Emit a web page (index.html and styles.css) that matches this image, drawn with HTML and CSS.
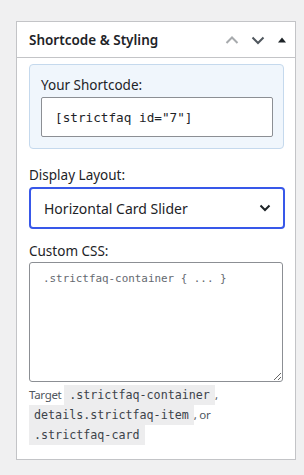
FILE: index.html
```html
<!DOCTYPE html>
<html lang="en">
<head>
    <meta charset="UTF-8">
    <meta name="viewport" content="width=device-width, initial-scale=1.0">
    <title>Shortcode &amp; Styling</title>
    <link rel="stylesheet" href="styles.css">
</head>
<body>
    <div class="postbox">
        <div class="postbox-header">
            <h2>Shortcode &amp; Styling</h2>
            <div class="handle-actions">
                <svg class="handle up" width="14" height="14" viewBox="0 0 14 14"><path d="M1.5 10 L7 4.5 L12.5 10" fill="none" stroke="currentColor" stroke-width="2"/></svg>
                <svg class="handle down" width="14" height="14" viewBox="0 0 14 14"><path d="M1.5 4.5 L7 10 L12.5 4.5" fill="none" stroke="currentColor" stroke-width="2"/></svg>
                <svg class="handle toggle" width="10" height="14" viewBox="0 0 10 14"><path d="M1 9.5 L5 4.5 L9 9.5 Z" fill="currentColor"/></svg>
            </div>
        </div>

        <div class="inside">
            <!-- Shortcode -->
            <div class="shortcode-box">
                <label class="field-label">Your Shortcode:</label>
                <input class="shortcode-input" type="text" value='[strictfaq id="7"]' readonly>
            </div>

            <!-- Layout -->
            <label class="field-label">Display Layout:</label>
            <div class="select-wrap">
                <span>Horizontal Card Slider</span>
                <svg width="12" height="8" viewBox="0 0 12 8"><path d="M1.5 1.5 L6 6 L10.5 1.5" fill="none" stroke="#1d2327" stroke-width="2"/></svg>
            </div>

            <!-- CSS -->
            <label class="field-label css-label">Custom CSS:</label>
            <textarea class="css-input" placeholder=".strictfaq-container { ... }"></textarea>
            <p class="help">Target <code>.strictfaq-container</code>, <code>details.strictfaq-item</code>, or <code>.strictfaq-card</code></p>
        </div>
    </div>
</body>
</html>
```

FILE: styles.css
```css
body {
    margin: 0;
    padding: 21px 0 0 16px;
    background-color: #f0f0f1;
    font-family: "Noto Sans", "Open Sans", sans-serif;
    color: #1d2327;
}

.postbox {
    width: 278px;
    background-color: #fff;
    border: 1px solid #c3c4c7;
}

.postbox-header {
    display: flex;
    align-items: center;
    justify-content: space-between;
    height: 35px;
    border-bottom: 1px solid #c3c4c7;
    padding: 0 8px 0 12px;
}

.postbox-header h2 {
    margin: 0;
    font-size: 13.5px;
    font-weight: 600;
}

.handle-actions {
    display: flex;
    align-items: center;
    gap: 12px;
}

.handle.up {
    color: #a7aaad;
}

.handle.down {
    color: #50575e;
}

.handle.toggle {
    color: #1d2327;
}

.inside {
    padding: 6px 11px 14px 12px;
}

.shortcode-box {
    background-color: #f0f6fc;
    border: 1px solid #c5d9ed;
    border-radius: 4px;
    padding: 11px 9px 11px 11px;
    margin-bottom: 17px;
}

.field-label {
    display: block;
    font-size: 13.5px;
    line-height: 18px;
    margin-bottom: 3px;
}

.shortcode-input {
    display: block;
    box-sizing: border-box;
    width: 232px;
    height: 40px;
    margin: 0;
    padding: 0 13px;
    border: 1px solid #8c8f94;
    border-radius: 2px;
    background-color: #fff;
    font-family: "DejaVu Sans Mono", monospace;
    font-size: 12.7px;
    color: #1d2327;
}

.select-wrap {
    box-sizing: border-box;
    width: 256px;
    height: 42px;
    display: flex;
    align-items: center;
    justify-content: space-between;
    padding: 0 12px 0 13px;
    border: 2px solid #3858e9;
    border-radius: 4px;
    font-size: 14px;
}

.css-label {
    margin-top: 13px;
    margin-bottom: 2px;
}

.css-input {
    display: block;
    box-sizing: border-box;
    width: 254px;
    height: 120px;
    margin: 0;
    padding: 9px 13px;
    border: 1px solid #8c8f94;
    border-radius: 3px;
    font-family: "DejaVu Sans Mono", monospace;
    font-size: 10.9px;
}

.css-input::placeholder {
    color: #646970;
}

.help {
    margin: 3px 0 0;
    font-size: 11.5px;
    line-height: 20px;
    color: #50575e;
    letter-spacing: -0.3px;
}

.help code {
    background-color: #ededee;
    color: #3c434a;
    font-family: "DejaVu Sans Mono", monospace;
    font-size: 11.7px;
    letter-spacing: 0;
    padding: 3px 5px;
}
```
